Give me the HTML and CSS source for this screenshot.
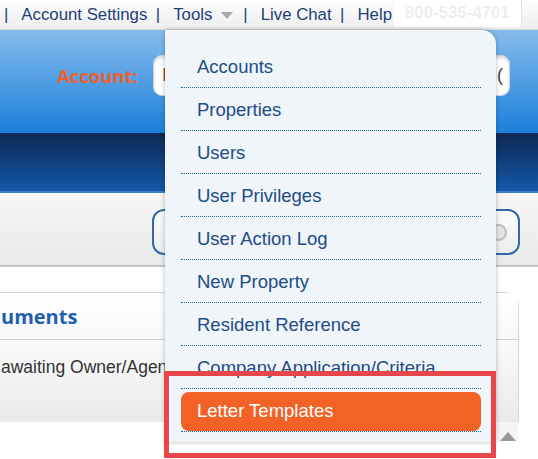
FILE: index.html
```html
<!DOCTYPE html>
<html>
<head>
<meta charset="utf-8">
<link rel="stylesheet" href="styles.css">
</head>
<body>
<div class="page">
  <div class="topbar">
    <span class="sep">|</span>
    <a class="toplink">Account Settings</a>
    <span class="sep">|</span>
    <a class="toplink tools">Tools</a>
    <span class="tri"></span>
    <span class="sep">|</span>
    <a class="toplink">Live Chat</a>
    <span class="sep">|</span>
    <a class="toplink help">Help</a>
    <span class="phone">800-535-4701</span>
  </div>
  <div class="header">
    <span class="acct-label">Account:</span>
    <div class="acct-input"><span class="acct-val">I</span><span class="acct-end">I(</span></div>
  </div>
  <div class="darkband"></div>
  <div class="searchpanel">
    <div class="searchbox"><span class="clear"></span></div>
  </div>
  <div class="card">
    <div class="card-head"><h2 class="card-title">uments</h2></div>
    <div class="card-row"><span class="row-text">awaiting Owner/Agent</span></div>
  </div>
  <div class="scrolltop"><span class="up"></span></div>

  <div class="menu">
    <ul class="menu-list">
      <li><a>Accounts</a></li>
      <li><a>Properties</a></li>
      <li><a>Users</a></li>
      <li><a>User Privileges</a></li>
      <li><a>User Action Log</a></li>
      <li><a>New Property</a></li>
      <li><a>Resident Reference</a></li>
      <li><a>Company Application/Criteria</a></li>
      <li class="active"><a>Letter Templates</a></li>
    </ul>
  </div>
  <div class="highlight"></div>
</div>
</body>
</html>
```

FILE: styles.css
```css
* { box-sizing: border-box; }
html, body { margin: 0; padding: 0; }
body {
  width: 538px;
  height: 459px;
  overflow: hidden;
  background: #fff;
  font-family: Arial, "Liberation Sans", sans-serif;
}
.page { position: relative; width: 538px; height: 459px; overflow: hidden; }

/* top bar */
.topbar {
  height: 30px;
  display: flex;
  align-items: center;
  padding-left: 4px;
  background: linear-gradient(#fdfdfd, #eeeeee);
  border-bottom: 1px solid #d9d9d9;
  font-size: 16.8px;
  color: #1e3f78;
  white-space: nowrap;
}
.sep { margin-right: 13px; color: #1e3f78; }
.toplink { margin-right: 8.5px; color: #1e3f78; }
.tools { margin-right: 9px; }
.tri {
  width: 0; height: 0;
  border-left: 6px solid transparent;
  border-right: 6px solid transparent;
  border-top: 7px solid #a9a9a9;
  margin-right: 10px;
  margin-top: 2px;
}
.help { margin-right: 2px; }
.phone {
  display: flex;
  align-items: center;
  height: 28px;
  margin-top: -2px;
  padding: 0 11px;
  width: 128px;
  background: #fff;
  border-right: 1px solid #e4e4e4;
  border-bottom: 1px solid #ececec;
  color: #eceef1;
  font-weight: bold;
  font-size: 16.8px;
}

/* blue header */
.header {
  height: 103px;
  display: flex;
  align-items: flex-start;
  padding: 25px 0 0 57px;
  background: linear-gradient(#86bcec, #1a80da);
}
.acct-label {
  font-family: "Open Sans", sans-serif;
  font-weight: bold;
  font-size: 18.5px;
  color: #f0602a;
  line-height: 41px;
  margin-right: 15px;
}
.acct-input {
  width: 357px;
  height: 41px;
  border-radius: 9px;
  background: #fff;
  border: 1px solid #c9d3dd;
  box-shadow: inset 0 2px 3px rgba(0,0,0,.15);
  display: flex;
  align-items: center;
  justify-content: space-between;
  padding: 0 6px 0 8px;
  font-size: 18px;
}
.acct-val { color: #8a4a35; }
.acct-end { color: #444; }

.darkband {
  height: 60px;
  background: linear-gradient(#0d2853, #1459ab);
  border-bottom: 2px solid #3b7cc9;
}

/* search panel */
.searchpanel {
  height: 74px;
  padding: 16px 0 0 152px;
  background: linear-gradient(#f7f6f5, #e9e9e9);
  border-bottom: 2px solid #c3c3c3;
}
.searchbox {
  position: relative;
  width: 368px;
  height: 46px;
  border: 2px solid #3467a8;
  border-radius: 12px;
  background: linear-gradient(#fbfbfb, #ececec);
  display: flex;
  align-items: center;
  justify-content: flex-end;
  padding-right: 11px;
}
.clear {
  width: 17px; height: 17px;
  border-radius: 50%;
  border: 2px solid #bdbdbd;
  background: #e6e6e6;
}

/* card */
.card {
  margin-top: 25px;
  margin-left: -20px;
  width: 539px;
  border: 1px solid #d4d4d4;
  border-bottom: none;
  border-radius: 0 14px 0 0;
  background: #fff;
}
.card-head {
  height: 47px;
  display: flex;
  align-items: center;
  padding-left: 20px;
  border-bottom: 1px solid #cfcfcf;
  background: linear-gradient(#ffffff, #f8f8f8);
}
.card-title {
  margin: 0;
  font-family: "Open Sans", sans-serif;
  font-weight: bold;
  font-size: 20px;
  color: #1c5fae;
}
.card-row {
  height: 82px;
  padding: 14px 0 0 20px;
  background: linear-gradient(#fbfbfb, #e9e9e9);
}
.row-text {
  font-size: 17.5px;
  color: #333;
  line-height: 26px;
}

.scrolltop {
  position: absolute;
  left: 497px;
  top: 422px;
  width: 21px;
  height: 19px;
  background: #f5f5f5;
  display: flex;
  align-items: flex-end;
  justify-content: center;
}
.up {
  width: 0; height: 0;
  border-left: 8px solid transparent;
  border-right: 8px solid transparent;
  border-bottom: 9px solid #999;
}

/* dropdown menu */
.menu {
  position: absolute;
  left: 165px;
  top: 30px;
  width: 331px;
  padding: 15px 15px 10px 16px;
  background: #eff5f8;
  border-radius: 0 14px 0 0;
  box-shadow: 0 0 5px rgba(0,0,0,.28);
}
.menu-list { list-style: none; margin: 0; padding: 0; }
.menu-list li {
  padding-top: 3px;
  border-bottom: 1px dotted #15679b;
}
.menu-list a {
  display: block;
  height: 39px;
  line-height: 38px;
  padding-left: 16px;
  border-radius: 8px;
  font-size: 18.5px;
  color: #214c88;
}
.menu-list li.active a {
  background: #f26126;
  color: #fff;
}

.highlight {
  position: absolute;
  left: 164px;
  top: 371px;
  width: 332px;
  height: 87px;
  border: 5px solid #e9464c;
}
```
